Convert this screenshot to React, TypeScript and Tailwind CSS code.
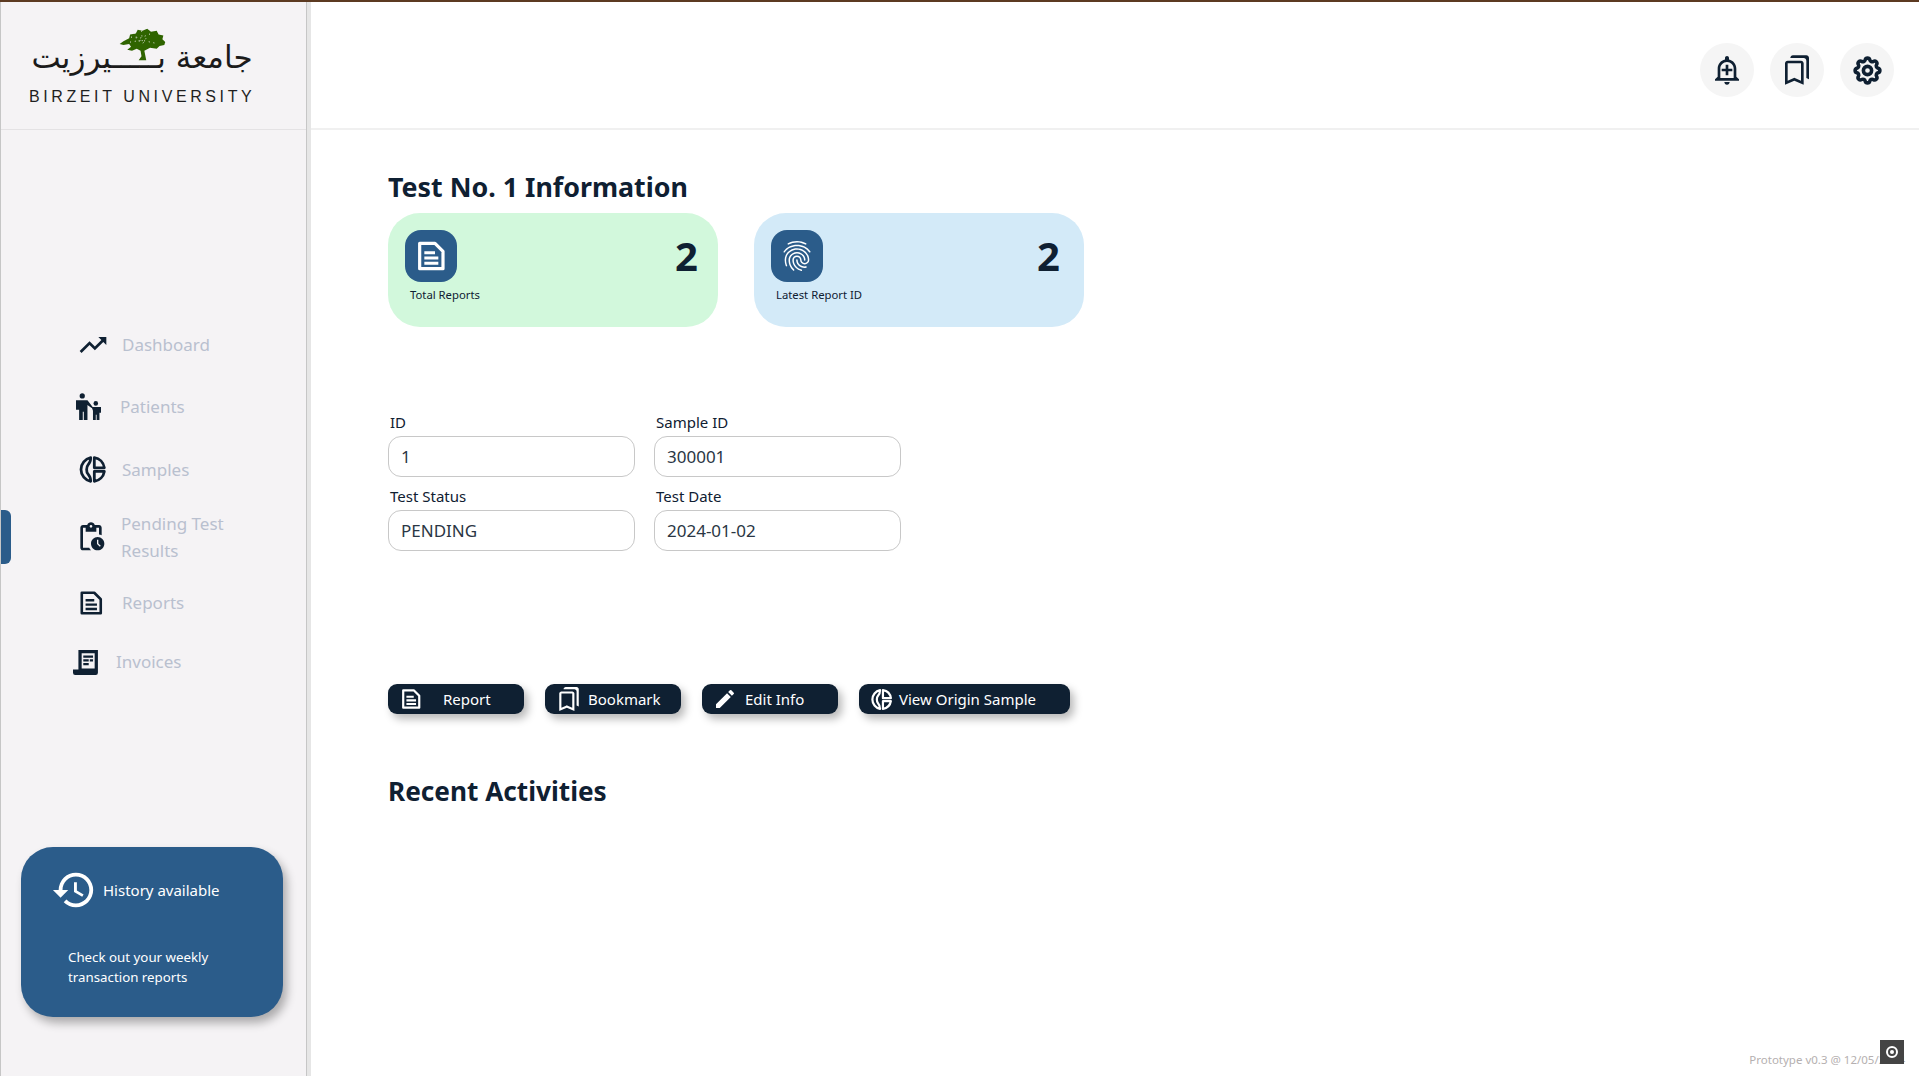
// Test details page: sidebar, header icons, stat cards, form and actions.
import type { ReactNode } from 'react';
import { MdEdit, MdFingerprint, MdHistory, MdOutlineAddAlert, MdOutlineBookmarks, MdOutlinePendingActions, MdTrendingUp } from 'react-icons/md';
import { TbSettings } from 'react-icons/tb';

function BzuLogo() {
  return (
    <div className="relative h-[128px] border-b border-[#e4e2e4] pl-[28px] pt-[33px]">
      <div dir="rtl" className="h-[48px] w-[226px] whitespace-nowrap text-center font-['DejaVu_Sans',sans-serif] text-[31px] leading-[44px] text-[#1b1b1b]">
        جامعة بـــــيرزيت
      </div>
      <svg viewBox="0 0 60 40" className="absolute left-[112px] top-[23px] h-[38px] w-[57px]">
        <path fill="#2f6400" d="M27 37h8l-2-10 6-3 7 1 3-3 5-1 1-3-3-3 1-4-5-1-2-4-6 1-4-3-5 2-5-1-2 4-6 1-1 4-6 3-4 3 4 1 6-1 2 3-4 3 5 1 5-2 4 2 1 6z" />
        <path stroke="#f5f3f5" strokeWidth="1" strokeDasharray="1 4" fill="none" d="M14 12l14 2 12-5M18 18l12-2 14 3M30 6l1 14 5-8M22 8l6 10" />
      </svg>
      <div className="mt-[4px] whitespace-nowrap font-['Liberation_Sans',sans-serif] text-[16px] leading-[20px] tracking-[3.6px] text-[#1f1f1f]">BIRZEIT UNIVERSITY</div>
    </div>
  );
}

function SampleIcon({ className }: { className: string }) {
  return (
    <svg viewBox="0 0 24 24" fill="none" stroke="currentColor" strokeWidth="2.3" strokeLinejoin="round" className={className}>
      <path d="M10.5 2.2A10 10 0 0 0 10.5 21.8C10.6 19 9.6 17.2 8.2 15.6 6.8 14 6.8 10 8.2 8.4 9.6 6.8 10.6 5 10.5 2.2Z" />
      <path d="M13.5 2.2A10 10 0 0 1 21.8 10.6H13.5Z" />
      <path d="M13.5 21.8A10 10 0 0 0 21.8 13.6H13.5Z" />
    </svg>
  );
}

function DocIcon({ className }: { className: string }) {
  return (
    <svg viewBox="0 0 24 24" fill="none" stroke="currentColor" className={className}>
      <path strokeWidth="2.4" strokeLinejoin="round" d="M3.5 2.5H15L21 8.5V21.5H3.5Z" />
      <path strokeWidth="2.2" d="M7 9.5H15M7 13.5H17.5M7 17.5H17.5" />
    </svg>
  );
}

function PatientsIcon({ className }: { className: string }) {
  return (
    <svg viewBox="0 0 24 26" fill="currentColor" className={className}>
      <circle cx="6" cy="2.8" r="2.5" />
      <path d="M0 7h11l5 6.5-1 1-4-3V26H7.5v-8h-1v8H3V16H0Z" />
      <circle cx="19" cy="10" r="2.2" />
      <path d="M15 13.5h9V19h-1.5v7h-2.7v-5h-.8v5h-2.7v-9Z" />
    </svg>
  );
}

function InvoiceIcon({ className }: { className: string }) {
  return (
    <svg viewBox="0 0 24 24" fill="currentColor" className={className}>
      <path fillRule="evenodd" d="M5 1h18v21a2 2 0 0 1-2 2H2a2 2 0 0 1-2-2v-3h5ZM8 4v14h12V4Z" />
      <path d="M9.5 6h9v2h-9ZM9.5 9.5h5v2h-5ZM15.5 9.5h3v2h-3ZM9.5 13h5v2h-5Z" />
    </svg>
  );
}

function NavItem({ icon, label, className, gap }: { icon: ReactNode; label: string; className: string; gap: string }) {
  return (
    <div className={`flex items-center ${className}`}>
      {icon}
      <span className={`${gap} text-[17px] leading-[27px] text-[#b9c0cf]`}>{label}</span>
    </div>
  );
}

function StatCard({ icon, label, tint, valueRight }: { icon: ReactNode; label: string; tint: string; valueRight: string }) {
  return (
    <div className={`relative h-[114px] w-[330px] rounded-[32px] pl-[17px] pt-[17px] ${tint}`}>
      <div className="flex h-[52px] w-[52px] items-center justify-center rounded-[16px] bg-[#2b5c8a] text-white">{icon}</div>
      <div className="ml-[5px] mt-[5px] text-[11.3px] leading-[16px] text-[#0f2032]">{label}</div>
      <div className={`absolute top-[21px] text-[40px] font-bold leading-[44px] text-[#0f2032] ${valueRight}`}>2</div>
    </div>
  );
}

function Field({ label, value }: { label: string; value: string }) {
  return (
    <div className="w-[247px]">
      <div className="ml-[2px] text-[15px] leading-[20px] text-[#0f2032]">{label}</div>
      <div className="mt-[4px] flex h-[41px] items-center rounded-[13px] border border-[#c8c8c8] bg-white pl-[12px] text-[17px] text-[#2a3644]">{value}</div>
    </div>
  );
}

function ActionButton({ icon, label, className, gap }: { icon: ReactNode; label: string; className: string; gap: string }) {
  return (
    <button className={`flex h-[30px] items-center rounded-[9px] bg-[#0f2032] text-[15px] text-white shadow-[4px_5px_8px_rgba(0,0,0,0.28)] ${className}`}>
      {icon}
      <span className={gap}>{label}</span>
    </button>
  );
}

function HeaderButton({ children }: { children: ReactNode }) {
  return <div className="flex h-[54px] w-[54px] items-center justify-center rounded-full bg-[#f5f5f5] text-[#0f2032]">{children}</div>;
}

export default function App() {
  return (
    <div className="flex h-screen overflow-hidden border-t-2 border-[#5c3a21] bg-white font-['Noto_Sans',sans-serif]">
      {/* sidebar */}
      <aside className="flex w-[307px] shrink-0 flex-col border-x border-[#c6c6c6] bg-[#f5f3f5]">
        <BzuLogo />
        <nav className="mt-[201px] flex flex-col text-[#0f2032]">
          <NavItem className="ml-[76px] h-[27px]" gap="ml-[13px]" label="Dashboard" icon={<MdTrendingUp className="h-[32px] w-[32px]" />} />
          <NavItem className="ml-[75px] mt-[35px] h-[27px]" gap="ml-[19px]" label="Patients" icon={<PatientsIcon className="h-[29px] w-[25px]" />} />
          <NavItem className="ml-[77px] mt-[36px] h-[27px]" gap="ml-[15px]" label="Samples" icon={<SampleIcon className="h-[29px] w-[29px]" />} />
          <div className="relative mt-[27px] flex h-[54px] items-center pl-[74px]">
            <div className="absolute left-0 top-0 h-[54px] w-[10px] rounded-r-[6px] bg-[#2b5c8a]" />
            <MdOutlinePendingActions className="h-[32px] w-[32px]" />
            <span className="ml-[14px] w-[130px] text-[17px] leading-[27px] text-[#b9c0cf]">Pending Test Results</span>
          </div>
          <NavItem className="ml-[77px] mt-[25px] h-[27px]" gap="ml-[18px]" label="Reports" icon={<DocIcon className="h-[26px] w-[26px]" />} />
          <NavItem className="ml-[72px] mt-[32px] h-[27px]" gap="ml-[17px]" label="Invoices" icon={<InvoiceIcon className="h-[26px] w-[26px]" />} />
        </nav>
        <div className="ml-[20px] mt-[172px] h-[170px] w-[262px] rounded-[32px] bg-[#2b5c8a] pl-[30px] pt-[20px] text-white shadow-[4px_6px_10px_rgba(0,0,0,0.3)]">
          <div className="flex items-center">
            <MdHistory className="h-[46px] w-[46px]" />
            <span className="ml-[6px] text-[15px]">History available</span>
          </div>
          <p className="ml-[17px] mt-[34px] w-[190px] text-[13.3px] leading-[20px]">Check out your weekly transaction reports</p>
        </div>
      </aside>

      <div className="w-[4px] shrink-0 bg-[#e6e6e6]" />

      {/* main */}
      <main className="relative min-w-0 flex-1">
        <header className="flex h-[128px] items-center justify-end gap-[16px] border-b-2 border-[#f0f0f0] pr-[25px] pt-[10px]">
          <HeaderButton><MdOutlineAddAlert className="h-[32px] w-[32px]" /></HeaderButton>
          <HeaderButton><MdOutlineBookmarks className="h-[32px] w-[32px]" /></HeaderButton>
          <HeaderButton><TbSettings className="h-[33px] w-[33px]" strokeWidth={2.6} /></HeaderButton>
        </header>

        <section className="pl-[77px]">
          <h1 className="mt-[37px] text-[26.8px] font-bold leading-[40px] text-[#0f2032]">Test No. 1 Information</h1>
          <div className="mt-[6px] flex gap-[36px]">
            <StatCard tint="bg-[#d2f8dc]" valueRight="right-[20px]" label="Total Reports" icon={<DocIcon className="h-[32px] w-[32px]" />} />
            <StatCard tint="bg-[#d3eaf8]" valueRight="right-[24px]" label="Latest Report ID" icon={<MdFingerprint className="h-[36px] w-[36px]" />} />
          </div>

          <div className="mt-[85px] grid w-[513px] grid-cols-[247px_247px] gap-x-[19px] gap-y-[9px]">
            <Field label="ID" value="1" />
            <Field label="Sample ID" value="300001" />
            <Field label="Test Status" value="PENDING" />
            <Field label="Test Date" value="2024-01-02" />
          </div>

          <div className="mt-[133px] flex gap-[21px]">
            <ActionButton className="w-[136px] pl-[12px]" gap="ml-[21px]" label="Report" icon={<DocIcon className="h-[22px] w-[22px]" />} />
            <ActionButton className="w-[136px] pl-[11px]" gap="ml-[6px]" label="Bookmark" icon={<MdOutlineBookmarks className="h-[26px] w-[26px]" />} />
            <ActionButton className="w-[136px] pl-[11px]" gap="ml-[8px]" label="Edit Info" icon={<MdEdit className="h-[24px] w-[24px]" />} />
            <ActionButton className="w-[211px] pl-[11px]" gap="ml-[6px]" label="View Origin Sample" icon={<SampleIcon className="h-[23px] w-[23px]" />} />
          </div>

          <h2 className="mt-[57px] text-[26.2px] font-bold leading-[40px] text-[#0f2032]">Recent Activities</h2>
        </section>

        {/* build stamp with the recorder control over it */}
        <div className="absolute bottom-[8px] right-[14px] text-[11.5px] leading-[16px] text-[#b5b0b0]">Prototype v0.3 @ 12/05/2024</div>
        <div className="absolute bottom-[12px] right-[15px] flex h-[24px] w-[24px] items-center justify-center bg-[#444444]">
          <div className="flex h-[12px] w-[12px] items-center justify-center rounded-full border-2 border-white">
            <div className="h-[4px] w-[4px] rounded-full bg-white" />
          </div>
        </div>
      </main>
    </div>
  );
}
